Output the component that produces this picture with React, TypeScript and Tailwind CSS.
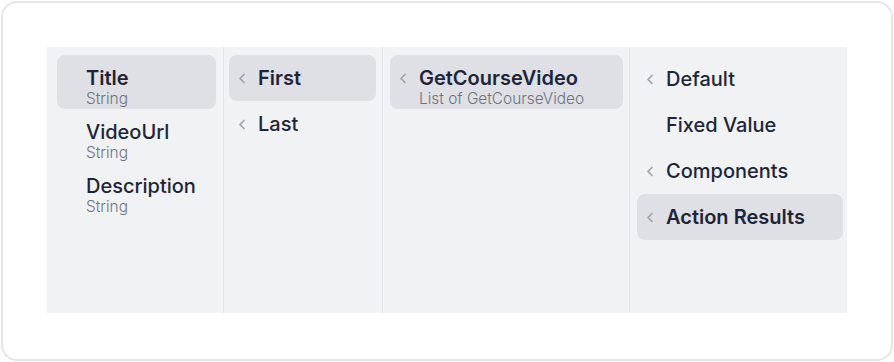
import React from "react";

type Item = {
  label: string;
  sub?: string;
  chevron?: boolean;
  active?: boolean;
};

function Chevron() {
  return (
    <svg
      width="8"
      height="11"
      viewBox="0 0 8 11"
      fill="none"
      className="absolute left-[9px] top-[18px]"
    >
      <path
        d="M6 1.5L2 5.5L6 9.5"
        stroke="#9ca3af"
        strokeWidth="1.7"
        strokeLinecap="round"
        strokeLinejoin="round"
      />
    </svg>
  );
}

function Row({ item }: { item: Item }) {
  const tall = !!item.sub;
  return (
    <div
      className={
        "relative pl-[29px] rounded-lg " +
        (tall ? "h-[54px] pt-[11px] " : "h-[46px] pt-[11px] ") +
        (item.active ? "bg-[#dfe0e5]" : "")
      }
    >
      {item.chevron && <Chevron />}
      <div
        className={
          "text-[20px] leading-6 text-[#1e2538] whitespace-nowrap " +
          (item.active ? "font-semibold" : "font-medium")
        }
      >
        {item.label}
      </div>
      {item.sub && (
        <div className="text-[15.4px] leading-[18px] font-light text-[#6b7280] whitespace-nowrap">
          {item.sub}
        </div>
      )}
    </div>
  );
}

export default function App() {
  const fields: Item[] = [
    { label: "Title", sub: "String", active: true },
    { label: "VideoUrl", sub: "String" },
    { label: "Description", sub: "String" },
  ];
  const picks: Item[] = [
    { label: "First", chevron: true, active: true },
    { label: "Last", chevron: true },
  ];
  const lists: Item[] = [
    {
      label: "GetCourseVideo",
      sub: "List of GetCourseVideo",
      chevron: true,
      active: true,
    },
  ];
  const sources: Item[] = [
    { label: "Default", chevron: true },
    { label: "Fixed Value" },
    { label: "Components", chevron: true },
    { label: "Action Results", chevron: true, active: true },
  ];

  return (
    <div
      className="w-[894px] h-[362px] bg-white p-px"
      style={{ fontFamily: "Inter, 'Noto Sans', sans-serif" }}
    >
      <div className="h-full rounded-[16px] border-2 border-[#e3e6ea] pl-[44px] pt-[44px]">
        <div className="flex w-[800px] h-[266px] bg-[#f1f2f4]">
          <div className="w-[177px] border-r border-[#e3e4e8] pl-[10px] pr-[7px] pt-[8px]">
            {fields.map((f) => (
              <Row key={f.label} item={f} />
            ))}
          </div>
          <div className="w-[159px] border-r border-[#e3e4e8] pl-[5px] pr-[6px] pt-[8px]">
            {picks.map((f) => (
              <Row key={f.label} item={f} />
            ))}
          </div>
          <div className="w-[247px] border-r border-[#e3e4e8] pl-[7px] pr-[6px] pt-[8px]">
            {lists.map((f) => (
              <Row key={f.label} item={f} />
            ))}
          </div>
          <div className="flex-1 pl-[7px] pr-[4px] pt-[9px]">
            {sources.map((f) => (
              <Row key={f.label} item={f} />
            ))}
          </div>
        </div>
      </div>
    </div>
  );
}
